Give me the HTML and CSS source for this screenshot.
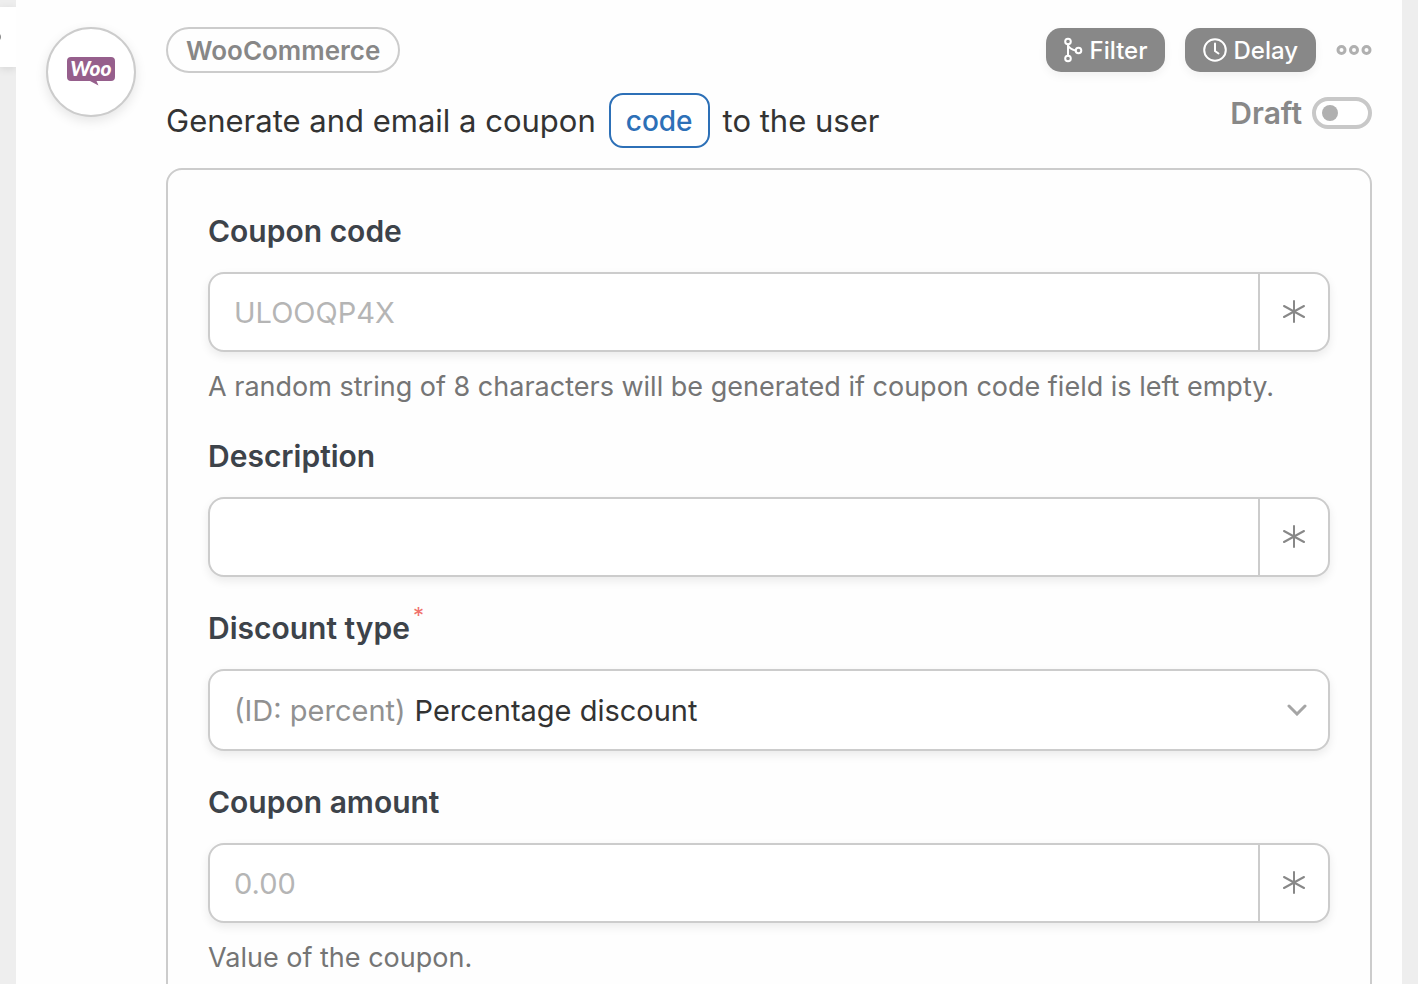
FILE: index.html
```html
<!DOCTYPE html>
<html lang="en">
<head>
  <meta charset="UTF-8" />
  <meta name="viewport" content="width=device-width, initial-scale=1.0"/>
  <title>WooCommerce - Generate and email a coupon code to the user</title>
  <link rel="stylesheet" href="styles.css">
</head>
<body>
  <svg class="sprite" aria-hidden="true">
    <symbol id="asterisk" viewBox="0 0 24 24">
      <path d="M12 1V22M2 6l20 11M22 6L2 17"/>
    </symbol>
  </svg>

  <aside class="rail">
    <div class="rail-tab"><span class="rail-dot"></span></div>
  </aside>

  <main class="action">
    <div class="logo">
      <svg viewBox="0 0 48 30" width="48" height="30" role="img" aria-label="Woo">
        <path fill="#965f8c" d="M4 0h40a4 4 0 0 1 4 4v16a4 4 0 0 1-4 4H29.500l2 4.500L23 24H4a4 4 0 0 1-4-4V4a4 4 0 0 1 4-4z"/>
        <text class="logo-text" x="24" y="19" text-anchor="middle">Woo</text>
      </svg>
    </div>

    <div class="content">
      <header class="head">
        <div class="head-main">
          <span class="pill">WooCommerce</span>
          <h1 class="sentence">Generate and email a coupon <button type="button" class="token">code</button> to the user</h1>
        </div>
        <div class="head-side">
          <div class="tools">
            <button type="button" class="tool">
              <svg viewBox="0 0 20 26" width="20" height="26">
                <circle cx="4" cy="4.500" r="2.800"/>
                <circle cx="4" cy="21.500" r="2.800"/>
                <circle cx="14.500" cy="13.500" r="2.800"/>
                <path d="M4 7.500V18.500M4 8.500c1.500 3 4.500 4.200 7.500 5"/>
              </svg>
              Filter
            </button>
            <button type="button" class="tool">
              <svg viewBox="0 0 24 24" width="24" height="24">
                <circle cx="12" cy="12" r="10.800"/>
                <path d="M12 5.500V13l3.500 2.500"/>
              </svg>
              Delay
            </button>
            <button type="button" class="more" aria-label="More options">
              <svg viewBox="0 0 36 12" width="36" height="12">
                <circle cx="5.500" cy="6" r="3.500"/>
                <circle cx="18" cy="6" r="3.500"/>
                <circle cx="30.500" cy="6" r="3.500"/>
              </svg>
            </button>
          </div>
          <label class="status">Draft <input type="checkbox" class="switch"></label>
        </div>
      </header>

      <form class="panel">
        <div class="field">
          <label for="code">Coupon code</label>
          <div class="box">
            <input type="text" id="code" placeholder="ULOOQP4X">
            <button type="button" class="token-btn" aria-label="Insert token"><svg width="24" height="24"><use href="#asterisk"/></svg></button>
          </div>
          <p class="help">A random string of 8 characters will be generated if coupon code field is left empty.</p>
        </div>

        <div class="field">
          <label for="description">Description</label>
          <div class="box">
            <input type="text" id="description">
            <button type="button" class="token-btn" aria-label="Insert token"><svg width="24" height="24"><use href="#asterisk"/></svg></button>
          </div>
        </div>

        <div class="field">
          <label for="type">Discount type<sup class="required">*</sup></label>
          <div class="box select-box">
            <span class="select-id">(ID: percent)</span>
            <select id="type">
              <option>Percentage discount</option>
            </select>
            <svg class="chevron" viewBox="0 0 20 12" width="20" height="12"><path d="M2 2l8 8 8-8"/></svg>
          </div>
        </div>

        <div class="field">
          <label for="amount">Coupon amount</label>
          <div class="box">
            <input type="text" id="amount" placeholder="0.00">
            <button type="button" class="token-btn" aria-label="Insert token"><svg width="24" height="24"><use href="#asterisk"/></svg></button>
          </div>
          <p class="help">Value of the coupon.</p>
        </div>
      </form>
    </div>
  </main>
</body>
</html>
```
FILE: styles.css
```css
* {
  box-sizing: border-box;
}
body {
  margin: 0;
  min-height: 100vh;
  display: flex;
  background: #eee;
  color: #333;
  font-family: Inter, 'Liberation Sans', sans-serif;
}
button, input, select {
  font-family: inherit;
  color: inherit;
}
button {
  cursor: pointer;
}
.sprite {
  position: absolute;
  width: 0;
  height: 0;
}
.rail {
  width: 16px;
  padding-top: 7px;
}
.rail-tab {
  height: 60px;
  display: flex;
  align-items: center;
  background: #fff;
  box-shadow: 0 2px 8px rgba(0,0,0,0.1);
}
.rail-dot {
  width: 10px;
  height: 10px;
  margin-left: -9px;
  border: 2px solid #888;
  border-radius: 50%;
}
.action {
  position: relative;
  flex: 1;
  display: flex;
  align-items: flex-start;
  gap: 30px;
  margin-right: 16px;
  padding: 27px 30px;
  background: #fefefe;
}
.logo {
  width: 90px;
  height: 90px;
  display: flex;
  align-items: center;
  justify-content: center;
  border: 2px solid #ccc;
  border-radius: 50%;
  background: #fff;
  box-shadow: 0 4px 12px rgba(0,0,0,0.1);
}
.logo-text {
  fill: #fff;
  font-family: Lato, sans-serif;
  font-size: 21px;
  font-style: italic;
  font-weight: 900;
}
.content {
  flex: 1;
}
.head {
  display: flex;
  justify-content: space-between;
  margin-bottom: 20px;
}
.pill {
  display: inline-block;
  height: 46px;
  padding: 0 18px;
  border: 2px solid #ccc;
  border-radius: 23px;
  color: #878787;
  font-size: 26px;
  font-weight: 600;
  line-height: 44px;
}
.sentence {
  display: flex;
  align-items: center;
  gap: 13px;
  margin: 20px 0 0;
  font-size: 31px;
  font-weight: 400;
}
.token {
  height: 55px;
  padding: 0 15px;
  border: 2px solid #2d70b7;
  border-radius: 14px;
  background: #fff;
  color: #2d70b7;
  font-size: 28px;
  font-weight: 500;
}
.head-side {
  display: flex;
  flex-direction: column;
  align-items: flex-end;
  padding-top: 1px;
}
.tools {
  display: flex;
  gap: 20px;
}
.tool {
  height: 44px;
  display: flex;
  align-items: center;
  gap: 6px;
  padding: 0 18px;
  border: none;
  border-radius: 15px;
  background: #888;
  box-shadow: 0 4px 10px rgba(0,0,0,0.05);
  color: #fff;
  font-size: 24px;
  font-weight: 500;
}
.tool svg, .more svg, .token-btn svg, .chevron {
  fill: none;
  stroke: currentColor;
  stroke-width: 2;
  stroke-linecap: round;
}
.more {
  padding: 0;
  border: none;
  background: none;
  color: #b0b0b0;
}
.more svg {
  display: block;
  stroke-width: 3;
}
.status {
  display: flex;
  align-items: center;
  gap: 10px;
  margin-top: 23px;
  color: #888;
  font-size: 30px;
  font-weight: 600;
  line-height: 36px;
}
.switch {
  appearance: none;
  width: 60px;
  height: 32px;
  margin: 0;
  padding: 4px 6px;
  border: 4px solid #c8c8c8;
  border-radius: 16px;
  background: #fff;
}
.switch::before {
  content: "";
  display: block;
  width: 16px;
  height: 16px;
  border-radius: 50%;
  background: #b0b0b0;
}
.switch:checked::before {
  margin-left: auto;
}
.panel {
  padding: 40px;
  border: 2px solid #ccc;
  border-radius: 16px;
}
.field {
  margin-bottom: 30px;
}
.field label {
  display: block;
  margin-bottom: 20px;
  color: #3d434a;
  font-size: 30px;
  font-weight: 600;
  line-height: 42px;
}
.required {
  margin-left: 3px;
  color: #f0716b;
  font-size: 22px;
  font-weight: 400;
  line-height: 0;
  vertical-align: 16px;
}
.box {
  height: 80px;
  display: flex;
  border: 2px solid #ccc;
  border-radius: 16px;
  background: #fff;
  box-shadow: 0 4px 10px rgba(0,0,0,0.08);
}
.box input {
  flex: 1;
  min-width: 0;
  padding: 0 24px;
  border: none;
  border-radius: 16px;
  background: none;
  font-size: 29px;
}
.box input::placeholder {
  color: #b5b5b5;
}
.token-btn {
  width: 70px;
  display: flex;
  align-items: center;
  justify-content: center;
  padding: 0;
  border: none;
  border-left: 2px solid #ccc;
  background: none;
  color: #888;
}
.select-box {
  height: 82px;
  align-items: center;
  gap: 9px;
  padding: 0 21px 0 24px;
  font-size: 29px;
}
.select-id {
  color: #919191;
}
.select-box select {
  appearance: none;
  flex: 1;
  height: 100%;
  padding: 0;
  border: none;
  background: none;
  font-size: 29px;
}
.chevron {
  color: #a5a5a5;
  stroke-width: 3;
}
.help {
  margin: 17px 0 31px;
  color: #757575;
  font-size: 27px;
  line-height: 35px;
}
```
